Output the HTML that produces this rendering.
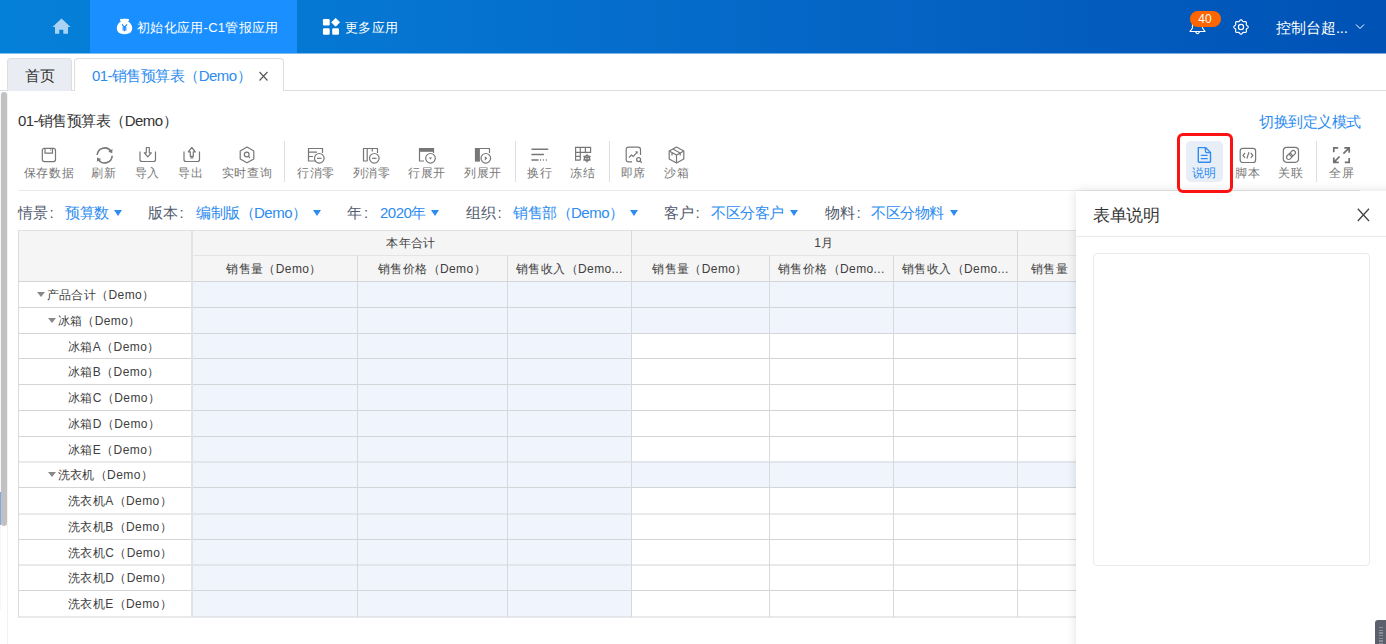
<!DOCTYPE html>
<html><head><meta charset="utf-8"><style>
*{box-sizing:border-box;margin:0;padding:0}
html,body{width:1386px;height:644px;overflow:hidden;background:#fff;font-family:"Liberation Sans",sans-serif;color:#333}
.a{position:absolute;white-space:nowrap}
svg{position:absolute;overflow:visible}
#hdr{position:absolute;left:0;top:0;width:1386px;height:53px;background:linear-gradient(90deg,#0580d8 0%,#0577d2 25%,#0566c6 60%,#0052b5 100%)}
.ht{position:absolute;color:#fff;font-size:13px;letter-spacing:0.3px;line-height:16px;white-space:nowrap}
.tab{position:absolute;top:58px;height:33px;border:1px solid #dcdee2;border-bottom:none;border-radius:4px 4px 0 0;font-size:15px;letter-spacing:-0.55px;line-height:34px;white-space:nowrap}
.tbl{position:absolute;top:166px;font-size:12px;letter-spacing:0.6px;line-height:14px;color:#777;white-space:nowrap}
.sep{position:absolute;top:141px;width:1px;height:41px;background:#dcdee2}
.fl{position:absolute;top:204px;font-size:15px;letter-spacing:-0.5px;line-height:17px;color:#515a6e;white-space:nowrap}
.fv{position:absolute;top:204px;font-size:15px;letter-spacing:-0.5px;line-height:17px;color:#2d8cf0;white-space:nowrap}
.tri{position:absolute;top:210px;width:0;height:0;border-left:4.5px solid transparent;border-right:4.5px solid transparent;border-top:6px solid #2d8cf0}
.hl{position:absolute;background:#d6d7da}
.vl{position:absolute;background:#dadbde}
.ce{position:absolute;font-size:12px;letter-spacing:0.4px;line-height:14px;color:#404040;white-space:nowrap}
.bg{position:absolute;background:#f0f4fd}
.rt{position:absolute;width:0;height:0;border-left:4.2px solid transparent;border-right:4.2px solid transparent;border-top:5.2px solid #888}
</style></head><body>
<div id="hdr">
<div style="position:absolute;left:90px;top:0;width:207px;height:53px;background:#1a8fff"></div>
<svg style="left:52px;top:18px" width="19" height="17" viewBox="0 0 19 17"><path d="M9.5 0.5 L18.5 9 L16 9 L16 15.8 L11.3 15.8 L11.3 11.8 L7.3 11.8 L7.3 15.8 L3 15.8 L3 9 L0.5 9 Z" fill="#a9d3f2"/></svg>
<svg style="left:116px;top:18px" width="17" height="17" viewBox="0 0 17 17"><path d="M4 1.2 Q5.5 0.2 6.7 1 Q8.5 0 10.3 1 Q11.5 0.2 13 1.2 Q13.6 2.6 12 3.6 Q16.3 6 16.2 10.6 Q16 16.2 8.5 16.2 Q1 16.2 0.8 10.6 Q0.7 6 5 3.6 Q3.4 2.6 4 1.2 Z" fill="#fff"/><path d="M6 6.3 L8.5 9.3 L11 6.3 M8.5 9.3 L8.5 13.3 M6.5 10 L10.5 10 M6.5 11.8 L10.5 11.8" stroke="#1a8fff" stroke-width="1.3" fill="none"/></svg>
<div class="ht" style="left:137px;top:20px">初始化应用-C1管报应用</div>
<svg style="left:322px;top:18px" width="18" height="17" viewBox="0 0 18 17"><rect x="0.9" y="1" width="6.8" height="6.6" rx="1.3" fill="#fff"/><path d="M13.6 0.3 L17.6 4.3 L13.6 8.3 L9.6 4.3 Z" fill="#fff" stroke="#fff" stroke-width="0.8" stroke-linejoin="round"/><rect x="0.9" y="10.2" width="6.8" height="6.6" rx="1.3" fill="#fff"/><rect x="10.2" y="10.2" width="6.8" height="6.6" rx="1.3" fill="#fff"/></svg>
<div class="ht" style="left:345px;top:20px">更多应用</div>
<svg style="left:1189px;top:18px" width="17" height="18" viewBox="0 0 17 18"><path d="M8.5 1.5 C4.8 1.5 3.5 4.5 3.5 7.5 L3.5 10 L1 13.5 L16 13.5 L13.5 10 L13.5 7.5 C13.5 4.5 12.2 1.5 8.5 1.5 Z" fill="none" stroke="#fff" stroke-width="1.2" stroke-linejoin="round"/><path d="M6.5 13.8 Q8.5 17.5 10.5 13.8" fill="none" stroke="#fff" stroke-width="1.2"/></svg>
<div style="position:absolute;left:1189.5px;top:11px;width:31px;height:16px;border-radius:8px;background:#ff6600;color:#fff;font-size:12px;line-height:16px;text-align:center">40</div>
<svg style="left:1232.5px;top:19px" width="16" height="16" viewBox="0 0 16 16"><path d="M8.00 0.80 L8.47 0.89 L8.90 1.16 L9.27 1.62 L9.58 2.11 L9.89 2.44 L10.22 2.64 L10.60 2.73 L11.05 2.72 L11.61 2.60 L12.20 2.52 L12.70 2.64 L13.09 2.91 L13.36 3.30 L13.48 3.80 L13.40 4.39 L13.28 4.95 L13.27 5.40 L13.36 5.78 L13.56 6.11 L13.89 6.42 L14.38 6.73 L14.84 7.10 L15.11 7.53 L15.20 8.00 L15.11 8.47 L14.84 8.90 L14.38 9.27 L13.89 9.58 L13.56 9.89 L13.36 10.22 L13.27 10.60 L13.28 11.05 L13.40 11.61 L13.48 12.20 L13.36 12.70 L13.09 13.09 L12.70 13.36 L12.20 13.48 L11.61 13.40 L11.05 13.28 L10.60 13.27 L10.22 13.36 L9.89 13.56 L9.58 13.89 L9.27 14.38 L8.90 14.84 L8.47 15.11 L8.00 15.20 L7.53 15.11 L7.10 14.84 L6.73 14.38 L6.42 13.89 L6.11 13.56 L5.78 13.36 L5.40 13.27 L4.95 13.28 L4.39 13.40 L3.80 13.48 L3.30 13.36 L2.91 13.09 L2.64 12.70 L2.52 12.20 L2.60 11.61 L2.72 11.05 L2.73 10.60 L2.64 10.22 L2.44 9.89 L2.11 9.58 L1.62 9.27 L1.16 8.90 L0.89 8.47 L0.80 8.00 L0.89 7.53 L1.16 7.10 L1.62 6.73 L2.11 6.42 L2.44 6.11 L2.64 5.78 L2.73 5.40 L2.72 4.95 L2.60 4.39 L2.52 3.80 L2.64 3.30 L2.91 2.91 L3.30 2.64 L3.80 2.52 L4.39 2.60 L4.95 2.72 L5.40 2.73 L5.78 2.64 L6.11 2.44 L6.42 2.11 L6.73 1.62 L7.10 1.16 L7.53 0.89 Z" fill="none" stroke="#fff" stroke-width="1.2" stroke-linejoin="round"/><circle cx="8" cy="8" r="2.6" fill="none" stroke="#fff" stroke-width="1.2"/></svg>
<div class="ht" style="left:1276px;top:18.5px;font-size:15px;line-height:18px;letter-spacing:0">控制台超<span style="letter-spacing:-0.3px">...</span></div>
<svg style="left:1355px;top:23px" width="10" height="8" viewBox="0 0 10 8"><path d="M1 1.5 L5 5.5 L9 1.5" fill="none" stroke="#fff" stroke-width="1" /></svg>
</div>
<div style="position:absolute;left:0;top:53px;width:1386px;height:1px;background:linear-gradient(90deg,#82bfec,#80a9da)"></div>
<div style="position:absolute;left:0;top:90px;width:1386px;height:1px;background:#dcdee2"></div>
<div class="tab" style="left:7px;width:65px;background:#e9ecf2;color:#333;padding-left:17px;font-size:15px;letter-spacing:0">首页</div>
<div class="tab" style="left:74px;width:210px;height:33px;background:#fff;color:#2d8cf0;padding-left:17px">01-销售预算表（Demo）</div>
<svg style="left:258px;top:70px" width="11" height="11" viewBox="0 0 11 11"><path d="M1.5 2 L9.5 10.5 M9.5 2 L1.5 10.5" stroke="#555" stroke-width="1.1"/></svg>
<div style="position:absolute;left:1px;top:92px;width:6px;height:434px;background:#c1c1c1;border-radius:3px"></div>
<div style="position:absolute;left:0;top:492px;width:1px;height:33px;background:#7ea6ea"></div>
<div style="position:absolute;left:7px;top:92px;width:1px;height:552px;background:#f2f2f2"></div>
<div style="position:absolute;left:0;top:92px;width:1px;height:400px;background:#f5f6fa"></div>
<div style="position:absolute;left:0;top:525px;width:1px;height:85px;background:#f5f6fa"></div>
<div class="a" style="left:18px;top:111.5px;font-size:15px;letter-spacing:-0.55px;line-height:17px;color:#333">01-销售预算表（Demo）</div>
<div class="a" style="left:1259px;top:113px;font-size:15px;letter-spacing:-0.5px;line-height:17px;color:#2d8cf0">切换到定义模式</div>
<svg style="left:41px;top:147px" width="16" height="16" viewBox="0 0 16 16"><rect x="1.3" y="1.4" width="13.2" height="13.2" rx="2" fill="none" stroke="#777" stroke-width="1.2"/><path d="M4 1.6 L4 6.2 L11.5 6.2 L11.5 1.6 M9.6 2.6 L9.6 3.6" fill="none" stroke="#777" stroke-width="1.2"/></svg>
<div class="tbl" style="left:18px;width:62px;text-align:center;color:#777">保存数据</div>
<svg style="left:96px;top:147px" width="18" height="17" viewBox="0 0 18 17"><path d="M1.21 8.01 A7.5 7.5 0 0 1 14.92 4.21 M16.19 8.79 A7.5 7.5 0 0 1 2.48 12.59" fill="none" stroke="#777" stroke-width="1.6"/><path d="M16.26 6.20 L16.49 2.06 L12.34 4.86 Z M1.14 10.60 L0.91 14.74 L5.06 11.94 Z" fill="#777"/></svg>
<div class="tbl" style="left:84px;width:40px;text-align:center;color:#777">刷新</div>
<svg style="left:139px;top:146px" width="18" height="17" viewBox="0 0 18 17"><path d="M1 5.5 L1 13.5 Q1 15.5 3 15.5 L14.5 15.5 Q16.5 15.5 16.5 13.5 L16.5 5.5" fill="none" stroke="#777" stroke-width="1.2"/><path d="M7.3 1.5 L10.3 1.5 L10.3 6.8 L12.3 6.8 L8.8 10.8 L5.3 6.8 L7.3 6.8 Z" fill="none" stroke="#777" stroke-width="1.2" stroke-linejoin="round"/></svg>
<div class="tbl" style="left:127px;width:41px;text-align:center;color:#777">导入</div>
<svg style="left:183px;top:146px" width="18" height="17" viewBox="0 0 18 17"><path d="M1 5.5 L1 13.5 Q1 15.5 3 15.5 L14.5 15.5 Q16.5 15.5 16.5 13.5 L16.5 5.5" fill="none" stroke="#777" stroke-width="1.2"/><path d="M7.3 10.3 L10.3 10.3 L10.3 5.8 L12.3 5.8 L8.8 1.5 L5.3 5.8 L7.3 5.8 Z M7.3 11.8 L10.3 11.8" fill="none" stroke="#777" stroke-width="1.2" stroke-linejoin="round"/></svg>
<div class="tbl" style="left:171px;width:40px;text-align:center;color:#777">导出</div>
<svg style="left:239px;top:146px" width="16" height="18" viewBox="0 0 16 18"><path d="M8 1 L14.8 4.9 L14.8 12.9 L8 16.8 L1.2 12.9 L1.2 4.9 Z" fill="none" stroke="#777" stroke-width="1.2" stroke-linejoin="round"/><circle cx="7.7" cy="8.5" r="2.4" fill="none" stroke="#777" stroke-width="1.2"/><path d="M9.5 10.3 L11 11.8" fill="none" stroke="#777" stroke-width="1.2"/></svg>
<div class="tbl" style="left:218px;width:58px;text-align:center;color:#777">实时查询</div>
<div class="sep" style="left:284px"></div>
<svg style="left:307px;top:147px" width="19" height="17" viewBox="0 0 19 17"><path d="M9 14 L1.5 14 L1.5 1.5 L15.5 1.5 L15.5 6" fill="none" stroke="#777" stroke-width="1.2"/><path d="M1.5 5.2 L10 5.2 M1.5 9.5 L6 9.5" fill="none" stroke="#777" stroke-width="1.2"/><circle cx="12.3" cy="11.3" r="4.8" fill="none" stroke="#777" stroke-width="1.2"/><path d="M10 11.3 L14.6 11.3" fill="none" stroke="#777" stroke-width="1.2"/></svg>
<div class="tbl" style="left:292px;width:48px;text-align:center;color:#777">行消零</div>
<svg style="left:362px;top:147px" width="19" height="17" viewBox="0 0 19 17"><path d="M5.5 14 L1.5 14 L1.5 1.5 L15.5 1.5 L15.5 6" fill="none" stroke="#777" stroke-width="1.2"/><path d="M5.2 1.5 L5.2 14 M10.3 1.5 L10.3 4.5" fill="none" stroke="#777" stroke-width="1.2"/><circle cx="12.3" cy="11.3" r="4.8" fill="none" stroke="#777" stroke-width="1.2"/><path d="M10 11.3 L14.6 11.3" fill="none" stroke="#777" stroke-width="1.2"/></svg>
<div class="tbl" style="left:347px;width:49px;text-align:center;color:#777">列消零</div>
<svg style="left:418px;top:147px" width="19" height="17" viewBox="0 0 19 17"><path d="M6 14 L1.5 14 L1.5 1.5 L15.5 1.5 L15.5 6" fill="none" stroke="#777" stroke-width="1.2"/><rect x="1.3" y="1.3" width="14.4" height="3.5" fill="#777"/><circle cx="12.5" cy="11.3" r="4.8" fill="none" stroke="#777" stroke-width="1.2"/><path d="M10.8 10.5 L14.2 10.5 L12.5 12.5 Z" fill="#777"/></svg>
<div class="tbl" style="left:403px;width:48px;text-align:center;color:#777">行展开</div>
<svg style="left:474px;top:147px" width="19" height="17" viewBox="0 0 19 17"><path d="M6 14 L1.5 14 L1.5 1.5 L15.5 1.5 L15.5 6" fill="none" stroke="#777" stroke-width="1.2"/><rect x="1.3" y="1.3" width="4.6" height="12.9" fill="#777"/><circle cx="11.8" cy="11.3" r="4.8" fill="none" stroke="#777" stroke-width="1.2"/><path d="M10.8 9.2 L13.3 11.3 L10.8 13.4 Z" fill="#777"/></svg>
<div class="tbl" style="left:459px;width:48px;text-align:center;color:#777">列展开</div>
<div class="sep" style="left:515px"></div>
<svg style="left:531px;top:147px" width="18" height="15" viewBox="0 0 18 15"><path d="M1 2.3 L16.7 2.3 M1 7.6 L12.4 7.6 M1 13 L7 13" stroke="#777" stroke-width="1.5" stroke-linecap="round"/><path d="M9 13 L10 13 M11.8 13 L12.8 13 M14.8 13 L15.8 13" stroke="#777" stroke-width="1.3"/></svg>
<div class="tbl" style="left:520px;width:40px;text-align:center;color:#777">换行</div>
<svg style="left:574px;top:146px" width="18" height="18" viewBox="0 0 18 18"><path d="M6.3 14.2 L1.6 14.2 L1.6 1.4 L16.6 1.4 L16.6 6.3 L10 6.3 M1.6 6.3 L10 6.3 M1.6 10.3 L6.3 10.3 M6.3 1.4 L6.3 14.2 M11.4 1.4 L11.4 6.3" fill="none" stroke="#777" stroke-width="1.2" stroke-width="1.3"/><g stroke="#777" stroke-width="1.1" stroke-linecap="round"><path d="M13 8.4 L13 16 M9.7 10.3 L16.3 14.1 M9.7 14.1 L16.3 10.3"/></g><circle cx="13" cy="12.2" r="2.6" fill="none" stroke="#777" stroke-width="1.4"/></svg>
<div class="tbl" style="left:563px;width:40px;text-align:center;color:#777">冻结</div>
<div class="sep" style="left:609px"></div>
<svg style="left:625px;top:146px" width="18" height="18" viewBox="0 0 18 18"><path d="M7 15.8 L3.5 15.8 Q1.2 15.8 1.2 13.5 L1.2 3.5 Q1.2 1.2 3.5 1.2 L13 1.2 Q15.5 1.2 15.5 3.5 L15.5 9" fill="none" stroke="#777" stroke-width="1.2"/><path d="M4 11.5 L6.5 9 L8.3 10.5 L12 6.3" fill="none" stroke="#777" stroke-width="1.2"/><path d="M12.8 5.2 L10 5.6 L12.4 8 Z" fill="#777"/><circle cx="13.6" cy="13.6" r="2" fill="none" stroke="#777" stroke-width="1.2" stroke-width="1.3"/><path d="M15 15 L16.8 16.8" fill="none" stroke="#777" stroke-width="1.2" stroke-width="1.3"/></svg>
<div class="tbl" style="left:614px;width:39px;text-align:center;color:#777">即席</div>
<svg style="left:668px;top:146px" width="17" height="18" viewBox="0 0 17 18"><path d="M8.5 1 L15.8 5 L15.8 13 L8.5 17 L1.2 13 L1.2 5 Z" fill="none" stroke="#777" stroke-width="1.2" stroke-linejoin="round"/><path d="M1.2 5 L8.5 9 L15.8 5 M8.5 9 L8.5 17 M4.9 3 L12.2 7 L12.2 9.5 M4 6.5 L4 9.5" fill="none" stroke="#777" stroke-width="1.2"/></svg>
<div class="tbl" style="left:657px;width:40px;text-align:center;color:#777">沙箱</div>
<div style="position:absolute;left:1186px;top:141px;width:37px;height:41px;background:#e7eef8;border-radius:5px"></div>
<svg style="left:1197px;top:146px" width="15" height="18" viewBox="0 0 15 18"><path d="M1.3 1.6 L8.5 1.6 L13.5 6.6 L13.5 15.6 Q13.5 16.3 12.8 16.3 L2 16.3 Q1.3 16.3 1.3 15.6 Z" fill="none" stroke="#2d8cf0" stroke-width="1.4" stroke-linejoin="round"/><path d="M8.4 1.8 L8.4 5 Q8.4 6.6 10 6.6 L13.4 6.6" fill="none" stroke="#2d8cf0" stroke-width="1.3"/><path d="M4.3 9.3 L10.2 9.3 M4.3 12.7 L10.2 12.7" stroke="#2d8cf0" stroke-width="1.3" stroke-linecap="round"/></svg>
<div class="tbl" style="left:1186px;width:37px;text-align:center;color:#2d8cf0">说明</div>
<svg style="left:1239px;top:147px" width="18" height="17" viewBox="0 0 18 17"><rect x="1.2" y="1.3" width="15.4" height="14.2" rx="2.5" fill="none" stroke="#777" stroke-width="1.2" stroke-width="1.4"/><path d="M6 6 L4 8.4 L6 10.8 M11.8 6 L13.8 8.4 L11.8 10.8 M9.9 5.3 L7.9 11.5" fill="none" stroke="#777" stroke-width="1.2" stroke-width="1"/></svg>
<div class="tbl" style="left:1228px;width:40px;text-align:center;color:#777">脚本</div>
<svg style="left:1282px;top:146px" width="18" height="18" viewBox="0 0 18 18"><rect x="1.3" y="1.3" width="15.2" height="15" rx="3.5" fill="none" stroke="#777" stroke-width="1.2" stroke-width="1.4"/><g transform="rotate(-45 9 9)"><rect x="3.6" y="6.8" width="6.3" height="4.3" rx="2.1" fill="none" stroke="#777" stroke-width="1.2" stroke-width="1.1"/><rect x="8.1" y="6.8" width="6.3" height="4.3" rx="2.1" fill="none" stroke="#777" stroke-width="1.2" stroke-width="1.1"/></g></svg>
<div class="tbl" style="left:1271px;width:40px;text-align:center;color:#777">关联</div>
<div class="sep" style="left:1316px"></div>
<svg style="left:1332px;top:146px" width="19" height="18" viewBox="0 0 19 18"><path d="M1.8 6.2 L1.8 1.8 L6.2 1.8 M12.3 1.8 L17.2 1.8 L17.2 6.7 M17.2 1.8 L11.4 7.6 M1.8 11.4 L1.8 16.3 L6.7 16.3 M1.8 16.3 L7.6 10.5 M12.8 16.3 L17.2 16.3 L17.2 11.9" fill="none" stroke="#707070" stroke-width="1.7"/></svg>
<div class="tbl" style="left:1322px;width:40px;text-align:center;color:#777">全屏</div>
<div style="position:absolute;left:18px;top:190px;width:1342px;height:1px;background:#e8eaec"></div>
<div class="fl" style="left:18px">情景<span style="margin-left:2.5px;letter-spacing:0">:</span></div>
<div class="fv" style="left:65px">预算数</div>
<div class="tri" style="left:114px"></div>
<div class="fl" style="left:148px">版本<span style="margin-left:2.5px;letter-spacing:0">:</span></div>
<div class="fv" style="left:196px">编制版（Demo）</div>
<div class="tri" style="left:313px"></div>
<div class="fl" style="left:347px">年<span style="margin-left:2.5px;letter-spacing:0">:</span></div>
<div class="fv" style="left:380px">2020年</div>
<div class="tri" style="left:431px"></div>
<div class="fl" style="left:466px">组织<span style="margin-left:2.5px;letter-spacing:0">:</span></div>
<div class="fv" style="left:513px">销售部（Demo）</div>
<div class="tri" style="left:630px"></div>
<div class="fl" style="left:664px">客户<span style="margin-left:2.5px;letter-spacing:0">:</span></div>
<div class="fv" style="left:711px">不区分客户</div>
<div class="tri" style="left:789.5px"></div>
<div class="fl" style="left:825px">物料<span style="margin-left:2.5px;letter-spacing:0">:</span></div>
<div class="fv" style="left:871px">不区分物料</div>
<div class="tri" style="left:950px"></div>
<div style="position:absolute;left:18px;top:230px;width:1182px;height:51px;background:#f5f5f5"></div>
<div class="bg" style="left:191px;top:281px;width:440px;height:336px"></div>
<div class="bg" style="left:631px;top:281px;width:569px;height:26px"></div>
<div class="bg" style="left:631px;top:307px;width:569px;height:26px"></div>
<div class="bg" style="left:631px;top:461px;width:569px;height:26px"></div>
<svg style="left:0;top:0" width="1386" height="644" viewBox="0 0 1386 644"><rect x="18" y="230" width="1182" height="1" fill="#e0e1e3"/><rect x="191" y="255" width="1009" height="1" fill="#e3e4e6"/><rect x="18" y="281" width="1182" height="1" fill="#d4d5d8"/><rect x="18" y="307" width="1182" height="1" fill="#d4d5d8"/><rect x="18" y="333" width="1182" height="1" fill="#d4d5d8"/><rect x="18" y="358" width="1182" height="1" fill="#d4d5d8"/><rect x="18" y="384" width="1182" height="1" fill="#d4d5d8"/><rect x="18" y="410" width="1182" height="1" fill="#d4d5d8"/><rect x="18" y="436" width="1182" height="1" fill="#d4d5d8"/><rect x="18" y="461.5" width="1182" height="1" fill="#d4d5d8"/><rect x="18" y="487" width="1182" height="1" fill="#d4d5d8"/><rect x="18" y="513.5" width="1182" height="1" fill="#d4d5d8"/><rect x="18" y="539" width="1182" height="1" fill="#d4d5d8"/><rect x="18" y="564.5" width="1182" height="1" fill="#d4d5d8"/><rect x="18" y="590" width="1182" height="1" fill="#d4d5d8"/><rect x="18" y="616.5" width="1182" height="1" fill="#d4d5d8"/><rect x="18" y="230" width="1" height="387.5" fill="#dadbde"/><rect x="191" y="230" width="2" height="387.5" fill="#e2e3e6"/><rect x="631" y="230" width="1" height="387.5" fill="#d8d9dc"/><rect x="1017" y="230" width="1" height="387.5" fill="#d8d9dc"/><rect x="357" y="255" width="1" height="362.5" fill="#d8d9dc"/><rect x="507" y="255" width="1" height="362.5" fill="#d8d9dc"/><rect x="769" y="255" width="1" height="362.5" fill="#d8d9dc"/><rect x="893" y="255" width="1" height="362.5" fill="#d8d9dc"/></svg>
<div class="ce" style="left:191px;top:236px;width:440px;text-align:center">本年合计</div>
<div class="ce" style="left:631px;top:236px;width:386px;text-align:center">1月</div>
<div class="ce" style="left:191px;top:262px;width:166px;text-align:center">销售量（Demo）</div>
<div class="ce" style="left:357px;top:262px;width:150px;text-align:center">销售价格（Demo）</div>
<div class="ce" style="left:516px;top:262px">销售收入（Demo...</div>
<div class="ce" style="left:631px;top:262px;width:138px;text-align:center">销售量（Demo）</div>
<div class="ce" style="left:778px;top:262px">销售价格（Demo...</div>
<div class="ce" style="left:902px;top:262px">销售收入（Demo...</div>
<div class="ce" style="left:1031px;top:262px">销售量</div>
<div class="rt" style="left:37px;top:292px"></div>
<div class="ce" style="left:46.5px;top:288px">产品合计（Demo）</div>
<div class="rt" style="left:48px;top:318px"></div>
<div class="ce" style="left:57.5px;top:314px">冰箱（Demo）</div>
<div class="ce" style="left:68px;top:340px">冰箱A（Demo）</div>
<div class="ce" style="left:68px;top:365px">冰箱B（Demo）</div>
<div class="ce" style="left:68px;top:391px">冰箱C（Demo）</div>
<div class="ce" style="left:68px;top:417px">冰箱D（Demo）</div>
<div class="ce" style="left:68px;top:443px">冰箱E（Demo）</div>
<div class="rt" style="left:48px;top:472px"></div>
<div class="ce" style="left:57.5px;top:468px">洗衣机（Demo）</div>
<div class="ce" style="left:68px;top:494px">洗衣机A（Demo）</div>
<div class="ce" style="left:68px;top:520px">洗衣机B（Demo）</div>
<div class="ce" style="left:68px;top:546px">洗衣机C（Demo）</div>
<div class="ce" style="left:68px;top:571px">洗衣机D（Demo）</div>
<div class="ce" style="left:68px;top:597px">洗衣机E（Demo）</div>
<div style="position:absolute;left:1076px;top:191px;width:320px;height:470px;background:#fff;box-shadow:0 0 10px rgba(0,0,0,0.13)"></div>
<div class="a" style="left:1093px;top:205.5px;font-size:17px;letter-spacing:-0.3px;line-height:19px;color:#333">表单说明</div>
<svg style="left:1357px;top:208px" width="13" height="14" viewBox="0 0 13 14"><path d="M0.8 0.8 L12 13 M12 0.8 L0.8 13" stroke="#444" stroke-width="1.3"/></svg>
<div style="position:absolute;left:1076px;top:236px;width:310px;height:1px;background:#e8eaec"></div>
<div style="position:absolute;left:1093px;top:253px;width:277px;height:313px;border:1px solid #e8eaec;border-radius:4px"></div>
<div style="position:absolute;left:1375px;top:620px;width:14px;height:30px;background:#5c606c;border-radius:3px"></div>
<div style="position:absolute;left:1379px;top:627px;width:4px;height:17px;background:repeating-linear-gradient(180deg,#8a8e98 0,#8a8e98 0.8px,#5c606c 0.8px,#5c606c 1.6px)"></div>
<div style="position:absolute;left:1176.5px;top:133px;width:56px;height:60px;border:3.3px solid #fb1212;border-radius:6px"></div>
</body></html>
